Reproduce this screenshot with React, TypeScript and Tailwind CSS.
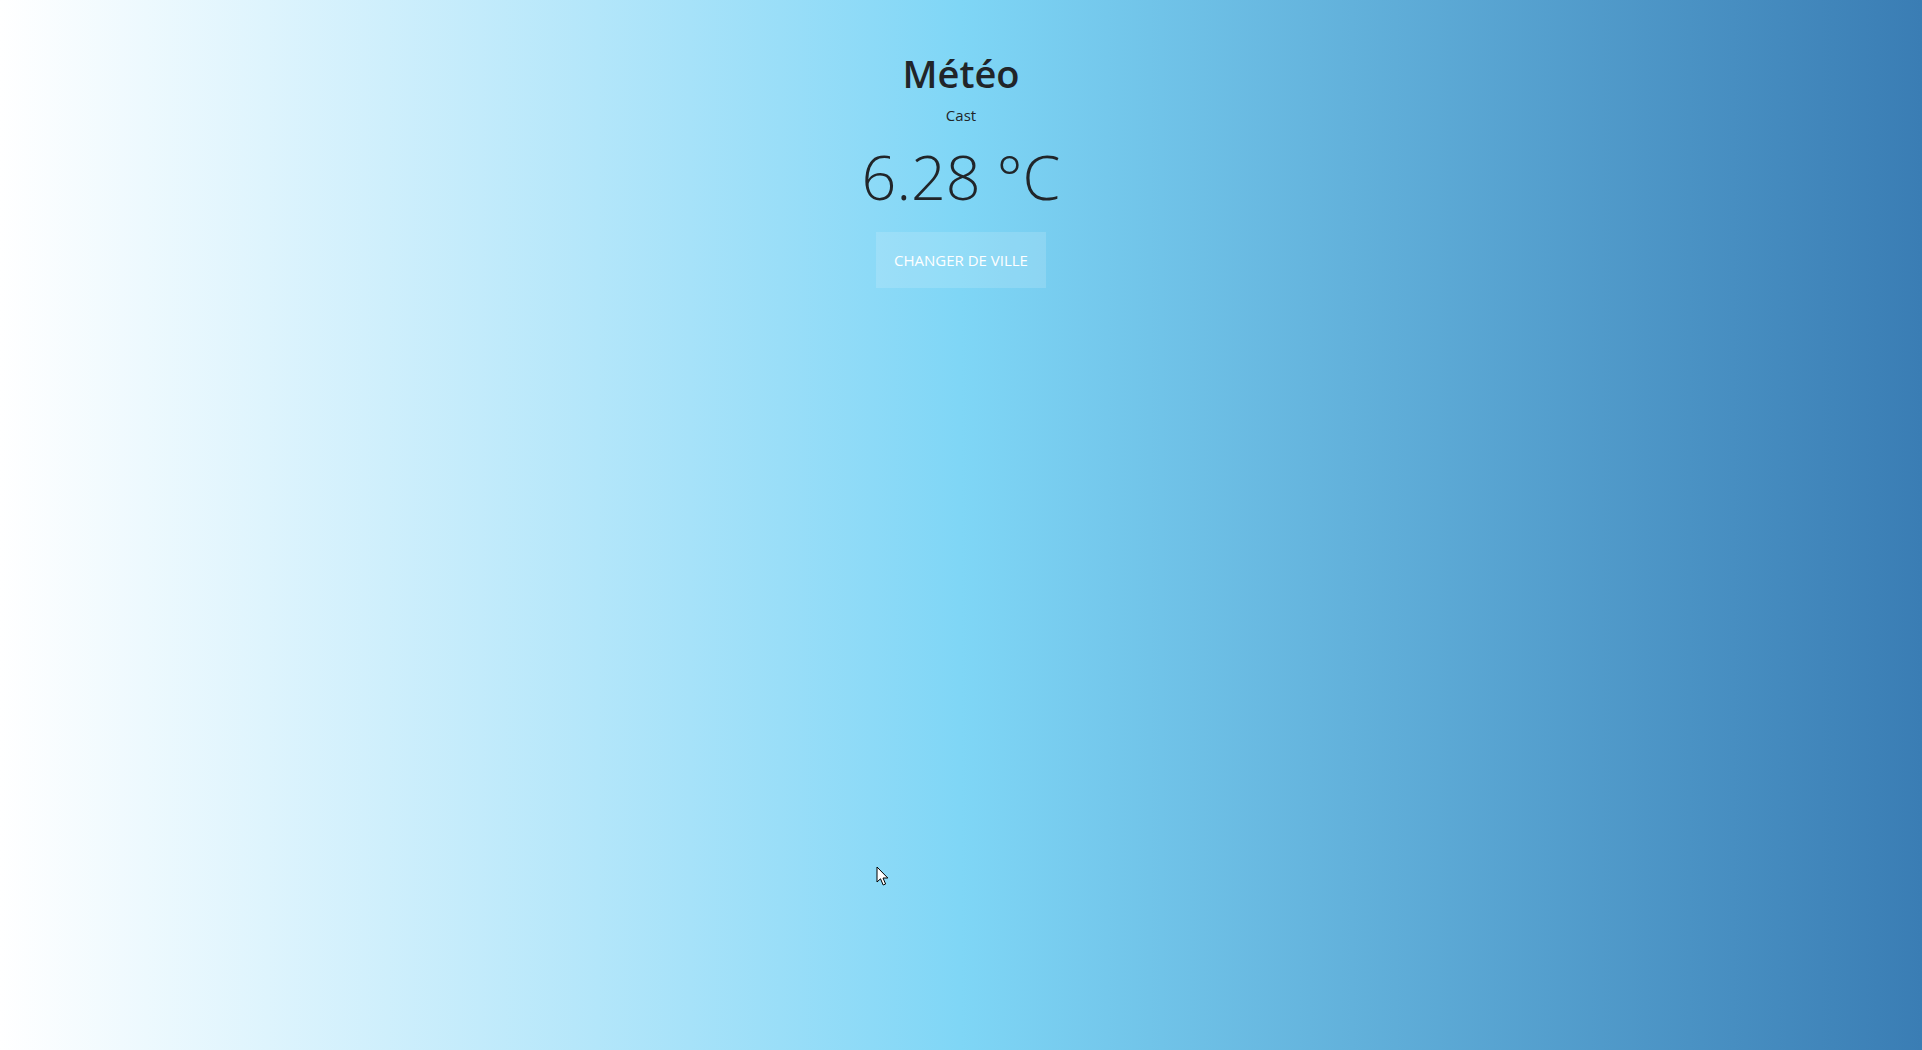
import React from "react";

function Cursor() {
  return (
    <svg
      className="absolute left-[876px] top-[866px] pointer-events-none"
      width="14"
      height="22"
      viewBox="0 0 14 22"
      aria-hidden="true"
    >
      <path
        d="M1 1 L1 16 L4.5 12.8 L7.2 19 L9.6 18 L7 12 L11.8 12 Z"
        fill="#fff"
        stroke="#000"
        strokeWidth="1"
        strokeLinejoin="round"
      />
    </svg>
  );
}

export default function App() {
  return (
    <div className="relative min-h-[1050px] w-full bg-gradient-to-r from-white via-[#7fd6f6] to-[#3a7db4] font-['Open_Sans',sans-serif] text-[#212529]">
      <div className="flex flex-col items-center pt-[49px]">
        <h1 className="text-[38px] leading-[48px] font-semibold">Météo</h1>
        <p className="mt-[7px] text-[15px] leading-[22px]">Cast</p>
        <p className="mt-[11px] text-[61px] leading-[80px] font-light">6.28 °C</p>
        <button
          type="button"
          className="mt-[15px] bg-white/15 px-[18px] h-[56px] text-[15px] text-white uppercase"
        >
          Changer de ville
        </button>
      </div>
      <Cursor />
    </div>
  );
}
